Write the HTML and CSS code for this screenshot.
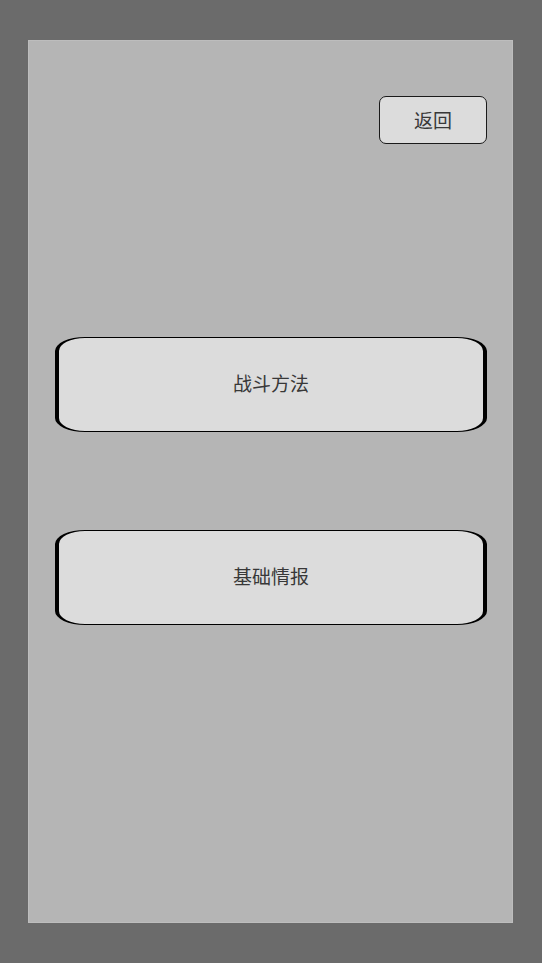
FILE: index.html
```html
<!DOCTYPE html>
<html lang="zh">
<head>
<meta charset="UTF-8">
<meta name="viewport" content="width=device-width, initial-scale=1.0">
<title>菜单</title>
<link rel="stylesheet" href="styles.css">
</head>
<body>
<div class="panel">
  <div class="top-bar">
    <button class="back-btn">返回</button>
  </div>

  <div class="menu">
    <button class="menu-btn">战斗方法</button>
    <button class="menu-btn">基础情报</button>
  </div>
</div>
</body>
</html>
```

FILE: styles.css
```css
body {
  margin: 0;
  padding: 40px 29px 40px 28px;
  background-color: #6b6b6b;
  font-family: "Noto Sans CJK SC", "Noto Sans", sans-serif;
}
.panel {
  box-sizing: border-box;
  width: 485px;
  height: 883px;
  background-color: #b5b5b5;
  border: 1px solid #bdbdbd;
  padding: 55px 25px 0 26px;
}
.top-bar {
  display: flex;
  justify-content: flex-end;
}
.back-btn {
  width: 108px;
  height: 48px;
  padding: 0 0 1px;
  background-color: #dcdcdc;
  border: 1px solid #1a1a1a;
  border-radius: 7px;
  font-family: inherit;
  font-size: 19px;
  color: #383838;
}
.menu {
  display: flex;
  flex-direction: column;
  gap: 98px;
  margin-top: 193px;
}
.menu-btn {
  box-sizing: border-box;
  width: 432px;
  height: 95px;
  padding: 0 0 4px;
  background-color: #dcdcdc;
  border: 1px solid #000;
  border-left-width: 4px;
  border-right-width: 4px;
  border-radius: 30px / 14px;
  font-family: inherit;
  font-size: 19px;
  color: #383838;
}
```
